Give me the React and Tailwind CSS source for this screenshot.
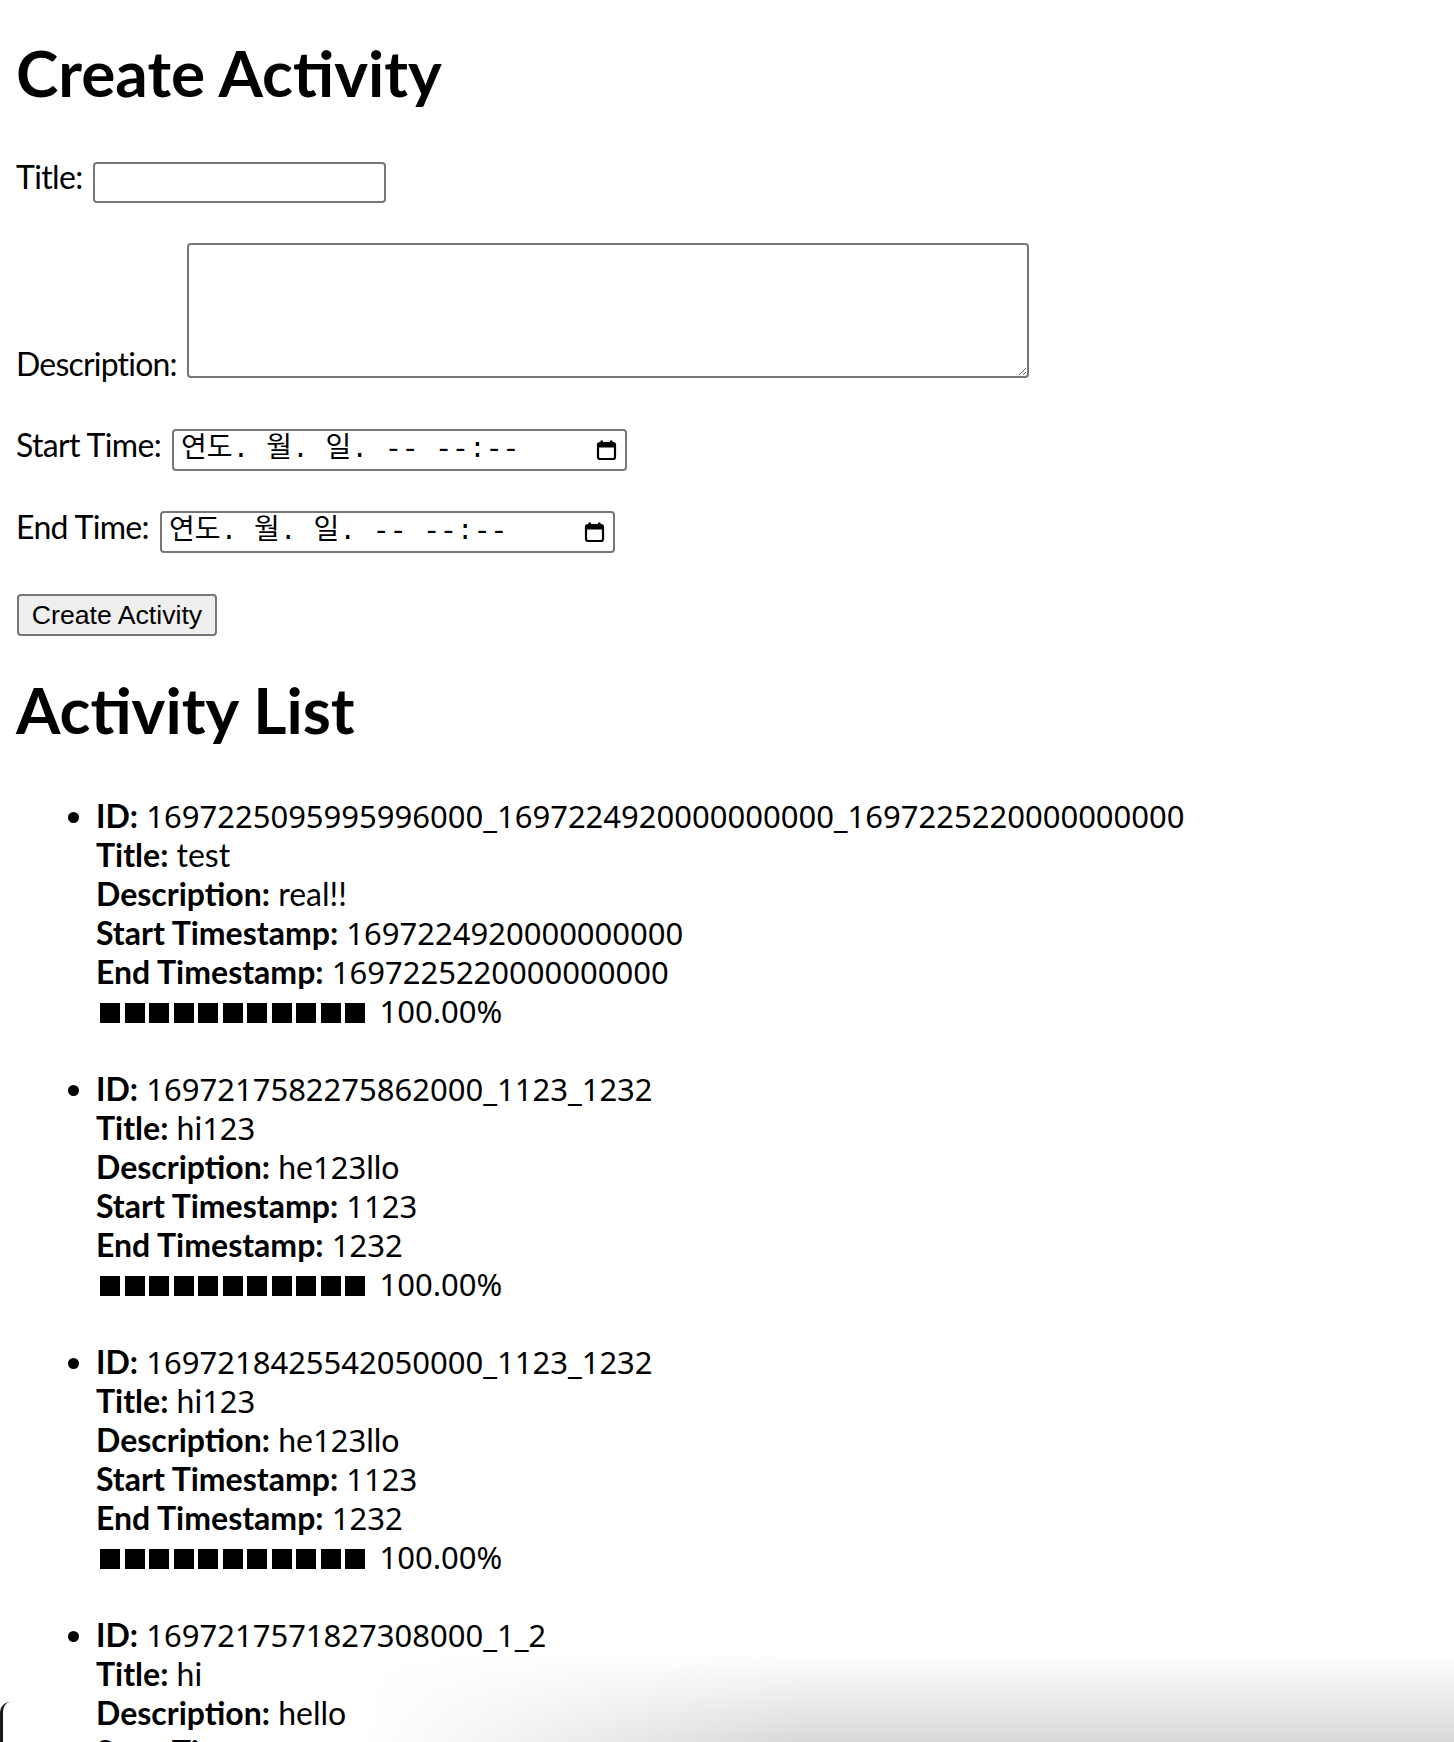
import React from 'react'

const activities = [
  {
    id: '1697225095995996000_1697224920000000000_1697225220000000000',
    title: 'test',
    description: 'real!!',
    start: '1697224920000000000',
    end: '1697225220000000000',
    progress: 100,
  },
  { id: '1697217582275862000_1123_1232', title: 'hi123', description: 'he123llo', start: '1123', end: '1232', progress: 100 },
  { id: '1697218425542050000_1123_1232', title: 'hi123', description: 'he123llo', start: '1123', end: '1232', progress: 100 },
  { id: '1697217571827308000_1_2', title: 'hi', description: 'hello', start: '1', end: '2', progress: 100 },
]

const Value = ({ text }) => {
  const parts = String(text).split(/([0-9._%]+)/).filter(Boolean)
  return (
    <>
      {parts.map((p, i) =>
        /^[0-9._%]+$/.test(p) ? (
          <span key={i} className="font-['Noto_Sans',sans-serif] text-[31px] leading-none">{p}</span>
        ) : (
          <span key={i}>{p}</span>
        )
      )}
    </>
  )
}

const CalendarIcon = () => (
  <svg width="21" height="22" viewBox="0 0 21 22" aria-hidden="true">
    <rect x="2" y="4" width="17" height="16" rx="2" fill="none" stroke="#000" strokeWidth="2.2" />
    <rect x="2" y="4" width="17" height="4.5" fill="#000" />
    <rect x="4.5" y="1.5" width="2.5" height="3.5" fill="#000" />
    <rect x="14" y="1.5" width="2.5" height="3.5" fill="#000" />
  </svg>
)

const DateField = () => (
  <div className="flex h-[42px] w-[455px] shrink-0 items-center justify-between rounded-[4px] border-2 border-[#767676] bg-white pl-[7px] pr-[8px]">
    <span className="whitespace-pre font-['Liberation_Mono','Noto_Sans_CJK_KR',monospace] text-[28px] leading-none">
      연도. 월. 일. -- --:--
    </span>
    <CalendarIcon />
  </div>
)

const ProgressBar = ({ progress }) => {
  const blocks = Math.round(progress / 100 * 11)
  return (
    <>
      <span className="ml-[4px]">
        {Array.from({ length: blocks }).map((_, i) => (
          <span key={i} className="mr-[4.5px] inline-block h-[20px] w-[20px] bg-black" />
        ))}
      </span>
      <span className="ml-[10px]"><Value text={`${progress.toFixed(2)}%`} /></span>
    </>
  )
}

const App = () => {
  return (
    <div className="relative h-[1742px] overflow-hidden bg-white px-4 pt-[34px] font-['Lato','Noto_Sans',sans-serif] text-[32px] leading-[39px] text-black">
      <h1 className="mb-[51px] text-[64px] font-bold leading-[77px]">Create Activity</h1>

      <form onSubmit={(e) => e.preventDefault()}>
        <div className="flex h-[41px] items-end gap-[10px]">
          <label className="mb-[7px] shrink-0 tracking-[-0.02em]">Title:</label>
          <input type="text" className="h-[41px] w-[293px] rounded-[4px] border-2 border-[#767676] bg-white" />
        </div>

        <div className="mt-[40px] flex h-[135px] items-end gap-[10px]">
          <label className="mb-[-5px] shrink-0 tracking-[-0.025em]">Description:</label>
          <textarea className="h-[135px] w-[842px] resize rounded-[4px] border-2 border-[#767676] bg-white" />
        </div>

        <div className="mt-[51px] flex h-[42px] items-end gap-[11px]">
          <label className="mb-[7px] shrink-0 tracking-[-0.02em]">Start Time:</label>
          <DateField />
        </div>

        <div className="mt-[40px] flex h-[42px] items-end gap-[11px]">
          <label className="mb-[7px] shrink-0 tracking-[-0.02em]">End Time:</label>
          <DateField />
        </div>

        <button
          type="submit"
          className="mt-[41px] ml-px flex h-[42px] w-[200px] items-center justify-center rounded-[4px] border-2 border-[#767676] bg-[#efefef] font-['Liberation_Sans',Arial,sans-serif] text-[26.67px] leading-none"
        >
          Create Activity
        </button>
      </form>

      <h1 className="mt-[35px] text-[64px] font-bold leading-[77px]">Activity List</h1>

      <ul className="mt-[48px] list-disc pl-[80px]">
        {activities.map((a) => (
          <li key={a.id} className="mb-[39px]">
            <strong>ID:</strong> <Value text={a.id} />
            <br />
            <strong>Title:</strong> <Value text={a.title} />
            <br />
            <strong>Description:</strong> <Value text={a.description} />
            <br />
            <strong>Start Timestamp:</strong> <Value text={a.start} />
            <br />
            <strong>End Timestamp:</strong> <Value text={a.end} />
            <br />
            <ProgressBar progress={a.progress} />
          </li>
        ))}
      </ul>

      <div className="pointer-events-none absolute inset-x-0 bottom-0 h-[90px] bg-[linear-gradient(to_bottom,rgba(255,255,255,0),#d9d9d9)] [mask-image:linear-gradient(to_right,transparent_25%,black_55%)]" />
      <div className="pointer-events-none absolute bottom-0 left-0 h-[40px] w-[10px] rounded-tl-[10px] border-l-[3px] border-[#1a1a1a]" />
    </div>
  )
}

export default App
